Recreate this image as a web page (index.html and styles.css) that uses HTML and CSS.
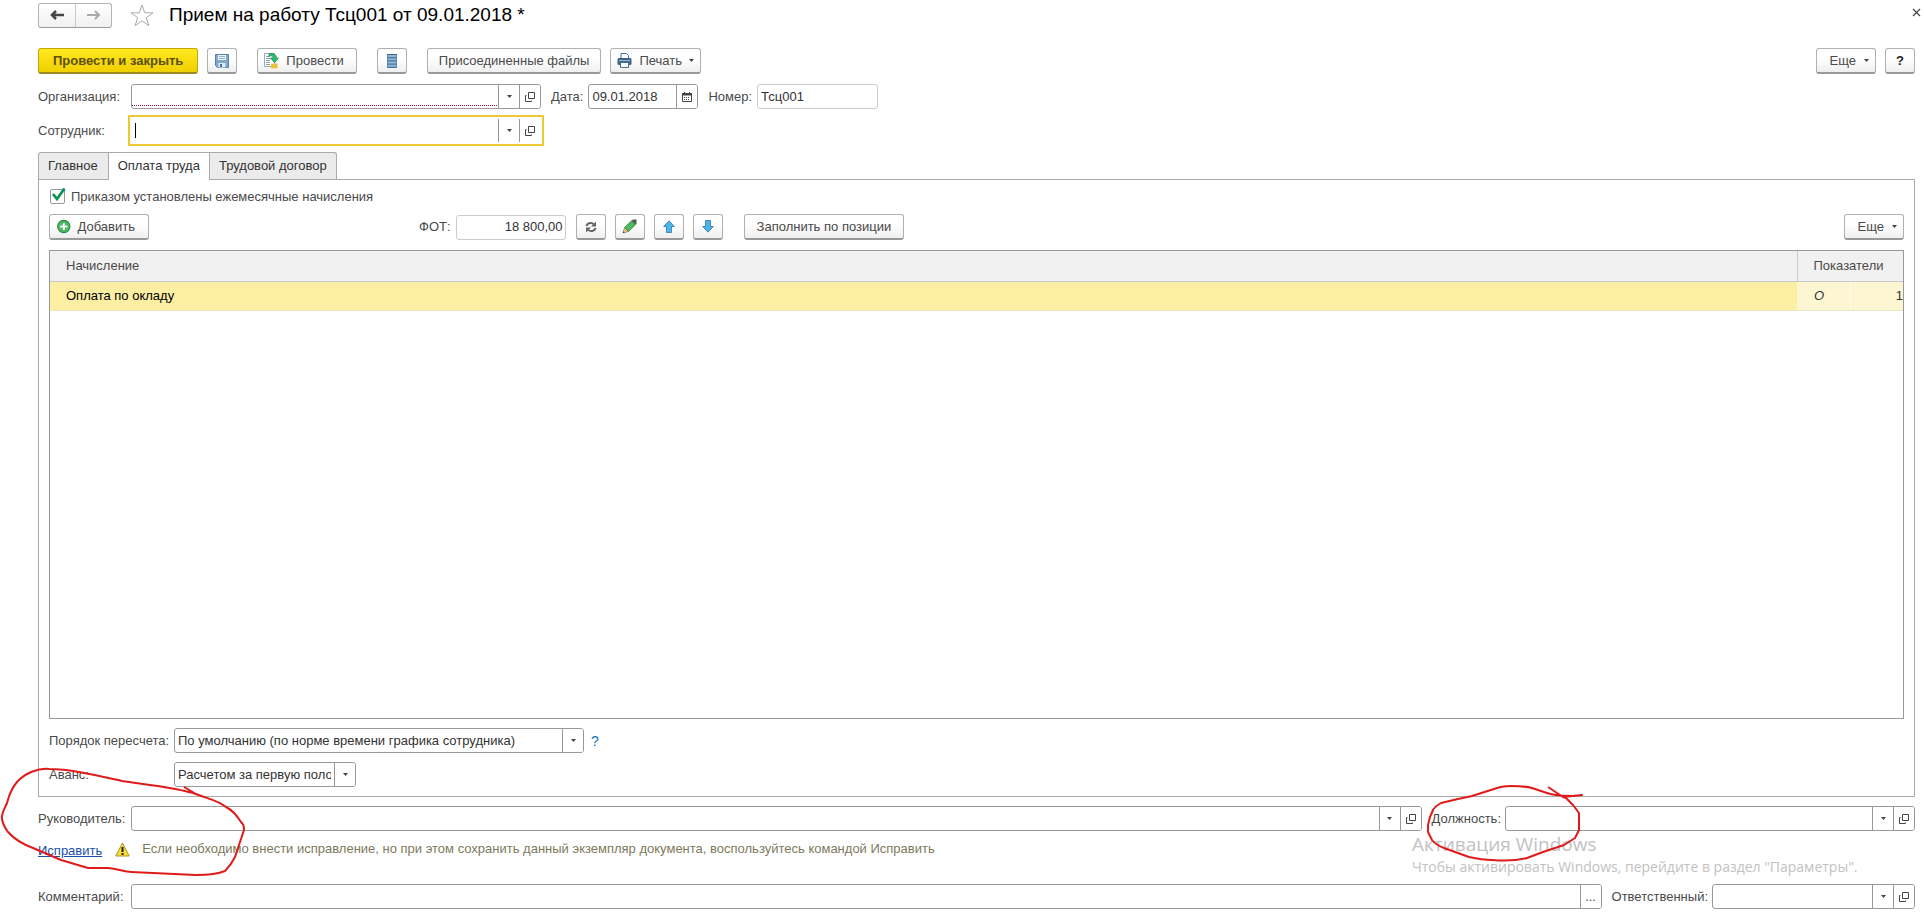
FILE: index.html
```html
<!DOCTYPE html>
<html lang="ru">
<head>
<meta charset="utf-8">
<title>Прием на работу</title>
<link rel="stylesheet" href="styles.css">
</head>
<body>
<svg class="sprite" aria-hidden="true">
  <symbol id="i-down" viewBox="0 0 5 3"><path d="M0 0h5L2.500 3z" fill="#444"/></symbol>
  <symbol id="i-open" viewBox="0 0 12 12"><path d="M4.500 1.500h6v6h-6zM2.500 4.500h-1v6h6v-1" fill="none" stroke="#444"/></symbol>
</svg>
<main class="page">
  <header class="title-row">
    <div class="nav">
      <button class="nav-btn" aria-label="Назад"><svg width="16" height="12" viewBox="0 0 16 12"><path d="M15 6H3M7 2L3 6l4 4" fill="none" stroke="#444" stroke-width="2.500"/></svg></button>
      <button class="nav-btn" aria-label="Вперед"><svg width="16" height="12" viewBox="0 0 16 12"><path d="M1 6h12M9 2l4 4-4 4" fill="none" stroke="#aaa" stroke-width="2"/></svg></button>
    </div>
    <button class="plain star" aria-label="Избранное"><svg width="24" height="23" viewBox="0 0 24 23"><path d="M12 1l2.700 7.800H23l-6.700 4.900 2.600 8L12 16.800l-6.900 4.900 2.600-8L1 8.800h8.300z" fill="#fff" stroke="#aaa"/></svg></button>
    <h1 class="title">Прием на работу Тсц001 от 09.01.2018 *</h1>
    <button class="plain close" aria-label="Закрыть"><svg width="9" height="9" viewBox="0 0 9 9"><path d="M1 1l7 7M8 1L1 8" stroke="#444" stroke-width="1.200"/></svg></button>
  </header>

  <div class="toolbar">
    <button class="btn primary">Провести и закрыть</button>
    <button class="btn icon" aria-label="Записать"><svg width="14" height="14" viewBox="0 0 14 14"><path d="M.5.5h13v13h-11l-2-2z" fill="#7fa8cd" stroke="#5a80a6"/><path d="M3 1h8v5H3z" fill="#eef4fa"/><path d="M4 2.500h6M4 4.500h6" stroke="#8fb0cf"/><path d="M3.500 9h7v4.500h-7z" fill="#dfe9f2"/><path d="M5 10h2v3H5z" fill="#47709a"/></svg></button>
    <button class="btn wide-gap post"><svg width="16" height="16" viewBox="0 0 16 16"><path d="M1.500.5h10v13h-10z" fill="#fff" stroke="#9aa7b5"/><path d="M3 3.500h4M3 5.500h5M3 7.500h4M3 9.500h4M3 11.500h4" stroke="#8a98a8"/><path d="M6 .8c5-1 7.500 1 7.500 4.200h2L11.500 9.800 7.500 5H10c0-2-1-2.500-4-2z" fill="#27c070" stroke="#128148" stroke-width=".6"/><path d="M8 10.500h6.500v5H8z" fill="#f5d24a"/><path d="M8 12h6.500M8 14h6.500" stroke="#d3a928" stroke-width=".7"/></svg>Провести</button>
    <button class="btn icon wide-gap" aria-label="Движения"><svg width="10" height="14" viewBox="0 0 10 14"><path d="M.5.500h9v13h-9z" fill="#8fb6d8" stroke="#6c94b8"/><path d="M0 .5h10M0 3.700h10M0 6.900h10M0 10.100h10M0 13.300h10" stroke="#3f6a92"/></svg></button>
    <button class="btn wide-gap files">Присоединенные файлы</button>
    <button class="btn print"><svg width="15" height="15" viewBox="0 0 15 15"><path d="M4 5V.500h5.500L11.500 2.500V5" fill="#fff" stroke="#47709a"/><rect x=".5" y="5" width="14" height="7" rx="1.500" fill="#3f6287"/><path d="M2 7.500h11" stroke="#9fb9d2"/><path d="M3.500 9.500h8v5h-8z" fill="#fff" stroke="#47709a"/></svg>Печать<svg class="caret"><use href="#i-down"/></svg></button>
    <span class="spacer"></span>
    <button class="btn more">Еще<svg class="caret"><use href="#i-down"/></svg></button>
    <button class="btn icon help">?</button>
  </div>

  <div class="row head-row">
    <label class="lbl" for="org">Организация:</label>
    <div class="field w-main required"><input id="org" type="text"><button aria-label="Выбрать организацию"><svg class="caret"><use href="#i-down"/></svg></button><button aria-label="Открыть организацию"><svg class="open"><use href="#i-open"/></svg></button></div>
    <label for="date">Дата:</label>
    <div class="field w-date"><input id="date" type="text" value="09.01.2018"><button aria-label="Календарь"><svg width="10" height="10" viewBox="0 0 10 10"><path d="M.5 2h9v7.500h-9z" fill="#fff" stroke="#444"/><path d="M0 1h10v2.500H0zM2 0h1v1H2zM7 0h1v1H7z" fill="#444"/><path d="M2 5.500h6M2 7.500h6" stroke="#444" stroke-dasharray="1 1"/></svg></button></div>
    <label for="num">Номер:</label>
    <div class="field w-num muted"><input id="num" type="text" value="Тсц001"></div>
  </div>

  <div class="row emp-row">
    <label class="lbl" for="emp">Сотрудник:</label>
    <div class="field w-main focused"><i class="cursor"></i><input id="emp" type="text"><button aria-label="Выбрать сотрудника"><svg class="caret"><use href="#i-down"/></svg></button><button aria-label="Открыть сотрудника"><svg class="open"><use href="#i-open"/></svg></button></div>
  </div>

  <nav class="tabs" role="tablist">
    <button class="tab" role="tab">Главное</button>
    <button class="tab active" role="tab" aria-selected="true">Оплата труда</button>
    <button class="tab" role="tab">Трудовой договор</button>
  </nav>

  <section class="panel">
    <label class="check"><input type="checkbox" checked><svg class="tick" viewBox="0 0 16 16"><path d="M3 7l4 5L14.500 1.500" fill="none" stroke="#0d9255" stroke-width="2.800"/></svg>Приказом установлены ежемесячные начисления</label>
    <div class="commands">
      <button class="btn add"><svg width="15" height="15" viewBox="0 0 15 15"><circle cx="7.500" cy="7.500" r="6.800" fill="#4db866" stroke="#2b8a43" stroke-width="1.200"/><path d="M7.500 3.500v8M3.500 7.500h8" stroke="#fff" stroke-width="2"/></svg>Добавить</button>
      <label class="fot" for="fot">ФОТ:</label>
      <div class="field w-fot muted"><input id="fot" type="text" value="18 800,00"></div>
      <div class="icon-set">
        <button class="btn icon" aria-label="Обновить"><svg width="12" height="12" viewBox="0 0 12 12"><path d="M1.500 5C2.500 1.500 7 1 9 3.500M10.500 7C9.500 10.500 5 11 3 8.500" fill="none" stroke="#666" stroke-width="2"/><path d="M11 .5V5.500H6zM1 11.500V6.500h5z" fill="#666"/></svg></button>
        <button class="btn icon" aria-label="Изменить"><svg width="15" height="15" viewBox="0 0 15 15"><path d="M1 14l1.500-5.500L6.500 12.500z" fill="#f0c27a" stroke="#8a6a35" stroke-width=".6"/><path d="M2.500 8.500L9.500 1.800l4 4L6.500 12.500z" fill="#4db85c" stroke="#2a7a36" stroke-width=".7"/><path d="M9.500 1.800L11 .5h3.500v4l-1 1.300z" fill="#505a55"/><path d="M1 14l.5-1.800L2.800 13.500z" fill="#333"/></svg></button>
        <button class="btn icon" aria-label="Вверх"><svg width="12" height="13" viewBox="0 0 12 13"><path d="M6 .8l5.300 5.700H8.500v6h-5v-6H.7z" fill="#4db3ea" stroke="#2778ad" stroke-width=".8"/></svg></button>
        <button class="btn icon" aria-label="Вниз"><svg width="12" height="13" viewBox="0 0 12 13"><path d="M6 12.200L.7 6.500h2.800v-6h5v6h2.800z" fill="#4db3ea" stroke="#2778ad" stroke-width=".8"/></svg></button>
      </div>
      <button class="btn fill">Заполнить по позиции</button>
      <span class="spacer"></span>
      <button class="btn more">Еще<svg class="caret"><use href="#i-down"/></svg></button>
    </div>
    <div class="grid">
      <table>
        <thead><tr><th>Начисление</th><th class="c-ind" colspan="2">Показатели</th></tr></thead>
        <tbody><tr><td>Оплата по окладу</td><td class="c-o">О</td><td class="c-n">1</td></tr></tbody>
      </table>
    </div>
    <div class="row opt-row">
      <label class="lbl-opt" for="order">Порядок пересчета:</label>
      <div class="field select w-main"><select id="order"><option>По умолчанию (по норме времени графика сотрудника)</option></select><span class="drop"><svg class="caret"><use href="#i-down"/></svg></span></div>
      <a class="hint" href="#">?</a>
    </div>
    <div class="row adv-row">
      <label class="lbl-opt" for="adv">Аванс:</label>
      <div class="field select w-adv"><select id="adv"><option>Расчетом за первую половину месяца</option></select><span class="drop"><svg class="caret"><use href="#i-down"/></svg></span></div>
    </div>
  </section>

  <footer class="footer">
    <div class="row">
      <label class="lbl" for="boss">Руководитель:</label>
      <div class="field grow"><input id="boss" type="text"><button aria-label="Выбрать руководителя"><svg class="caret"><use href="#i-down"/></svg></button><button aria-label="Открыть руководителя"><svg class="open"><use href="#i-open"/></svg></button></div>
      <label class="lbl-next" for="post">Должность:</label>
      <div class="field w-main"><input id="post" type="text"><button aria-label="Выбрать должность"><svg class="caret"><use href="#i-down"/></svg></button><button aria-label="Открыть должность"><svg class="open"><use href="#i-open"/></svg></button></div>
    </div>
    <div class="fix-row">
      <a class="fix" href="#">Исправить</a>
      <svg width="15" height="15" viewBox="0 0 15 15"><path d="M7.500 1L14.200 14H.8z" fill="#f7dc35" stroke="#a8962a" stroke-linejoin="round"/><path d="M7.500 5v5M7.500 11v2" stroke="#222" stroke-width="2"/></svg>
      <span class="note">Если необходимо внести исправление, но при этом сохранить данный экземпляр документа, воспользуйтесь командой Исправить</span>
    </div>
    <div class="row">
      <label class="lbl" for="comment">Комментарий:</label>
      <div class="field grow"><input id="comment" type="text"><button aria-label="Открыть комментарий">...</button></div>
      <label class="lbl-next" for="resp">Ответственный:</label>
      <div class="field w-resp"><input id="resp" type="text"><button aria-label="Выбрать ответственного"><svg class="caret"><use href="#i-down"/></svg></button><button aria-label="Открыть ответственного"><svg class="open"><use href="#i-open"/></svg></button></div>
    </div>
    <div class="watermark"><p class="wm-title">Активация Windows</p><p class="wm-text">Чтобы активировать Windows, перейдите в раздел "Параметры".</p></div>
    <svg class="mark mark-left" viewBox="0 0 250 120"><path d="M184 27L196 34C180 28 150 25 122 21 95 15 70 9 49 9 38 8 25 13 17 22 10 30 9 37 7 43 4 50 1 54 2 59 3 65 5 68 8 72 15 80 25 85 33 88L61 100 88 108H108C118 109 125 112 131 112L196 115C210 115 218 114 225 111 231 105 232 103 235 97L244 70C244 65 243 64 241 62 236 54 230 49 226 47 218 40 205 38 196 34"/></svg>
    <svg class="mark mark-right" viewBox="0 0 170 90"><path d="M128 7L143 17 162 15 153 16C143 16 135 16 127 13L112 8C104 6 98 6 91 6 84 6 79 7 74 9L52 16 38 19 21 23C16 26 14 28 13 30L10 37 8 45V52L12 60C15 64 19 66 24 68L49 77C58 79 65 80 72 80 84 81 95 81 107 78L123 72 144 65 155 58 159 50V33L153 25 146 18 143 17"/></svg>
  </footer>
</main>
</body>
</html>
```
FILE: styles.css
```css
* { box-sizing: border-box; }
body { margin: 0; background: #fff; color: #4a4a4a; font: 13px/16px "Liberation Sans", Arial, sans-serif; }
button, input, select { font: inherit; color: inherit; margin: 0; }
.sprite { display: none; }
.page { min-height: 100vh; display: flex; flex-direction: column; padding: 2px 9px 12px 38px; }
.caret { width: 5px; height: 3px; }
.open { width: 12px; height: 12px; }
.spacer { flex: 1; }
.plain { border: 0; background: none; padding: 0; display: flex; }

.title-row { display: flex; align-items: center; height: 26px; }
.nav { display: flex; border: 1px solid #b4b4b4; border-bottom-color: #999; border-radius: 3px; height: 25px; background: linear-gradient(#fff, #f0f0f0); }
.nav-btn { width: 36px; border: 0; background: none; padding: 0; display: flex; align-items: center; justify-content: center; }
.nav-btn + .nav-btn { border-left: 1px solid #ccc; }
.star { margin-left: 18px; }
.title { margin: 0 0 0 15px; font-size: 19px; line-height: 24px; font-weight: 400; color: #000; }
.close { margin: -6px -6px 0 auto; }

.toolbar { display: flex; gap: 9px; margin-top: 20px; }
.btn { display: flex; align-items: center; justify-content: center; height: 26px; padding: 0 13px; border: 1px solid #b0b0b0; border-bottom: 2px solid #999; border-radius: 3px; background: linear-gradient(#fff 40%, #efefef); white-space: nowrap; }
.btn.icon { width: 30px; padding: 0; }
.btn.primary { padding: 0 14px; background: linear-gradient(#ffe81f, #f0d000); border-color: #c3a800; border-bottom-color: #9c8a20; font-weight: 700; color: #5c4f10; }
.wide-gap { margin-left: 11px; }
.btn.post { padding: 0 12px 0 5px; gap: 7px; }
.btn.files { padding: 0 11px; }
.btn.print { padding: 0 6px; gap: 7px; }
.btn.more { padding: 0 6px 0 13px; gap: 8px; }
.btn.help { font-weight: 700; color: #222; }

.row { display: flex; align-items: center; height: 25px; }
.head-row { margin-top: 10px; }
.head-row label:not(.lbl) { margin: 0 5px 0 10px; }
.lbl { width: 93px; flex: none; white-space: nowrap; }
.field { display: flex; height: 25px; border: 1px solid #999; border-radius: 3px; background: #fff; overflow: hidden; }
.field input, .field select { flex: 1; min-width: 0; width: 0; border: 0; padding: 0 3px; background: transparent; outline: 0; color: #333; }
.field button, .drop { width: 21px; flex: none; border: 0; border-left: 1px solid #999; background: #fff; padding: 0; display: flex; align-items: center; justify-content: center; }
.field select { appearance: none; text-overflow: clip; overflow: hidden; }
.drop { pointer-events: none; }
.muted { border-color: #ccc; }
.w-main { width: 410px; }
.w-date { width: 110px; }
.w-num { width: 121px; }
.w-fot { width: 110px; }
.w-fot input { text-align: right; padding-right: 2px; }
.w-adv { width: 182px; }
.w-resp { width: 203px; }
.grow { flex: 1; }
.required input { background: linear-gradient(90deg, #a01035 1px, transparent 1px) 2px 20px / 2px 1px repeat-x; }
.emp-row { height: 31px; margin-top: 6px; }
.focused { height: 31px; width: 416px; margin-left: -3px; border: 2px solid #efc935; border-radius: 0; padding: 2px; }
.cursor { width: 1px; background: #000; margin: 4px 0 4px 3px; }

.tabs { display: flex; align-items: flex-start; margin-top: 6px; }
.tab { height: 27px; padding: 0 9px 1px; border: 1px solid #aaa; border-bottom: 0; background: #ebebeb; color: #333; }
.tab + .tab { border-left: 0; }
.tab:first-child { padding-right: 10px; border-radius: 3px 0 0 0; }
.tab:last-child { border-radius: 0 3px 0 0; }
.tab.active { background: #fff; height: 28px; padding-bottom: 2px; margin-bottom: -1px; position: relative; }

.panel { flex: 1; display: flex; flex-direction: column; border: 1px solid #aaa; padding: 9px 10px; }
.check { display: flex; align-items: center; gap: 6px; height: 15px; margin-left: 1px; position: relative; }
.check input { appearance: none; width: 15px; height: 15px; margin: 0; border: 1px solid #999; border-radius: 2px; }
.tick { position: absolute; left: 0; top: -2px; width: 16px; height: 16px; }
.commands { display: flex; align-items: center; margin-top: 10px; }
.btn.add { width: 100px; padding: 0 13px 0 7px; gap: 7px; }
.fot { margin: 0 5px 0 270px; }
.icon-set { display: flex; gap: 9px; margin: 0 21px 0 10px; }
.btn.fill { padding: 0 12px; }
.grid { flex: 1; margin-top: 10px; border: 1px solid #999; min-height: 120px; overflow: hidden; }
table { width: 100%; border-collapse: collapse; table-layout: fixed; }
th { height: 30px; padding: 0 16px; background: #f1f1f1; border-bottom: 1px solid #c8c8c8; text-align: left; font-weight: 400; }
.c-ind { width: 106px; border-left: 1px solid #ccc; }
td { height: 29px; padding: 0 16px; background: #fcefa4; border-top: 1px solid #fff; border-bottom: 1px solid #eee6c0; color: #000; }
.c-o { background: #fdf6d2; padding: 0 17px; font-style: italic; color: #333; border-right: 1px solid #fffbe8; }
.c-n { background: #fdf6d2; padding: 0; text-align: right; color: #333; }
.opt-row { margin-top: 9px; }
.adv-row { margin-top: 9px; }
.lbl-opt { width: 125px; }
.hint { margin-left: 7px; color: #1673b5; text-decoration: none; font-size: 14px; }

.footer { position: relative; margin-top: 9px; }
.lbl-next { margin: 0 4px 0 10px; }
.fix-row { display: flex; align-items: center; height: 36px; margin-bottom: 17px; }
.fix { color: #1a50a8; margin-right: 13px; padding-top: 3px; }
.note { margin-left: 12px; color: #7d7a5c; }
.watermark { position: absolute; right: 49px; top: 25px; color: #c2c2c2; pointer-events: none; font-family: "Open Sans", "Noto Sans", sans-serif; width: 454px; white-space: nowrap; }
.watermark p { margin: 0; }
.wm-title { font-size: 19px; line-height: 26px; }
.wm-text { font-size: 14px; line-height: 20px; }
.mark { position: absolute; pointer-events: none; fill: none; stroke: #e01b1b; stroke-width: 2; stroke-linejoin: round; }
.mark-left { left: -38px; top: -46px; width: 250px; height: 120px; }
.mark-right { right: 325px; top: -26px; width: 170px; height: 90px; }
```
